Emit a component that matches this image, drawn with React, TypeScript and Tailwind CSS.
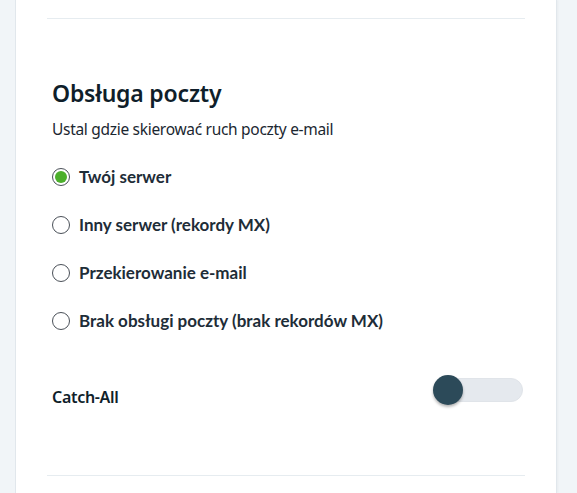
import React, { useState } from "react";

const options = [
  "Twój serwer",
  "Inny serwer (rekordy MX)",
  "Przekierowanie e-mail",
  "Brak obsługi poczty (brak rekordów MX)",
];

export default function App() {
  const [selected, setSelected] = useState(0);
  const [catchAll, setCatchAll] = useState(false);

  return (
    <div className="flex h-[493px] w-[577px] overflow-hidden bg-[#f1f5f8]">
      <div className="ml-[15px] w-[542px] shrink-0 border-x border-[#e1e7ec] bg-white shadow-[1px_0_2px_rgba(0,0,0,0.04)]">
        <div className="ml-[31px] mr-[31px] pt-[18px]">
          <div className="h-px bg-[#e6ecf0]" />

          <div className="pl-[5px] pt-[59px]">
            <h2 className="text-[23px] font-semibold leading-[30px] text-[#0f1e2a] [font-family:'Noto_Sans',sans-serif] tracking-[-0.2px]">
              Obsługa poczty
            </h2>
            <p className="mt-[11px] text-[15.5px] leading-[20px] text-[#1b2731] [font-family:'Noto_Sans',sans-serif] tracking-[-0.3px]">
              Ustal gdzie skierować ruch poczty e-mail
            </p>

            <div className="mt-[14px] flex flex-col">
              {options.map((label, i) => (
                <label
                  key={label}
                  className="flex h-[48px] cursor-pointer items-center gap-[9px]"
                  onClick={() => setSelected(i)}
                >
                  <span className="flex h-[18px] w-[18px] items-center justify-center rounded-full border-[1.5px] border-[#4a5058] bg-white">
                    {selected === i && (
                      <span className="h-[12px] w-[12px] rounded-full bg-[#4caf2c]" />
                    )}
                  </span>
                  <span className="text-[17px] font-bold text-[#1e2d38] [font-family:Lato,sans-serif]">
                    {label}
                  </span>
                </label>
              ))}
            </div>

            <div className="mt-[30px] flex items-center justify-between pr-[2px]">
              <span className="pt-[10px] text-[16px] font-semibold text-[#0f1e2a] [font-family:'Noto_Sans',sans-serif] tracking-[-0.3px]">
                Catch-All
              </span>
              <button
                onClick={() => setCatchAll(!catchAll)}
                className="relative mb-[2px] h-[32px] w-[90px]"
                aria-label="Catch-All"
              >
                <span className="absolute right-0 top-[3px] h-[24px] w-[84px] rounded-full border border-[#e0e4e9] bg-[#e5e9ee]" />
                <span
                  className={
                    catchAll
                      ? "absolute right-0 top-0 h-[30px] w-[30px] rounded-full bg-[#2c4a59] shadow-[0_2px_3px_rgba(0,0,0,0.3)]"
                      : "absolute left-0 top-0 h-[30px] w-[30px] rounded-full bg-[#2c4a59] shadow-[0_2px_3px_rgba(0,0,0,0.3)]"
                  }
                />
              </button>
            </div>
          </div>

          <div className="mt-[66px] h-px bg-[#e6ecf0]" />
        </div>
      </div>
    </div>
  );
}
